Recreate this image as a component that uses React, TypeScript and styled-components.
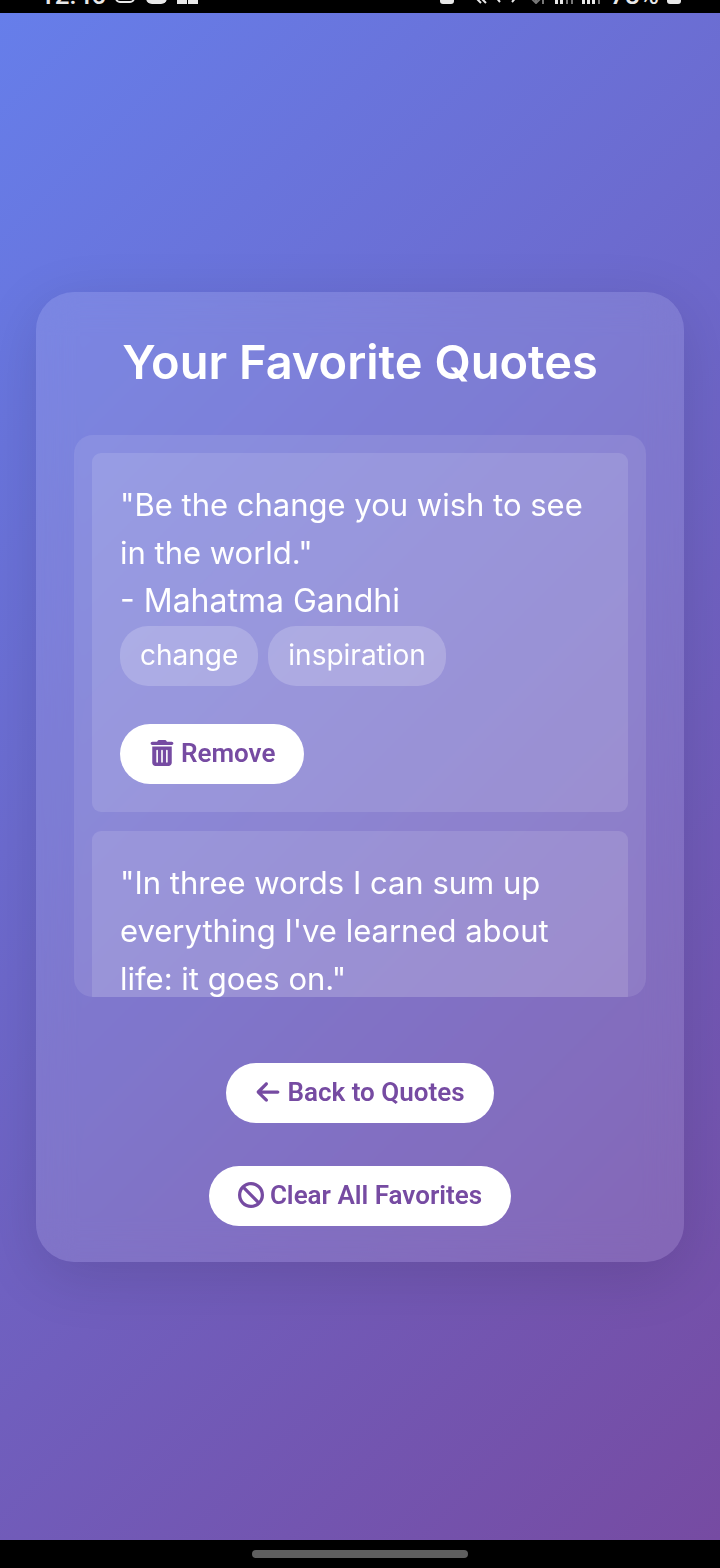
import React from 'react';
import styled, { createGlobalStyle } from 'styled-components';
import { FaArrowLeft, FaBan, FaTrashCan } from 'react-icons/fa6';

const GlobalStyle = createGlobalStyle`
  *, *::before, *::after { box-sizing: border-box; }
  body {
    margin: 0;
    background: #000;
    color: #fff;
    font-family: Inter, 'Open Sans', sans-serif;
  }
`;

const Screen = styled.div`
  display: flex;
  flex-direction: column;
  min-height: 100vh;
`;

const StatusBar = styled.header`
  display: flex;
  justify-content: space-between;
  align-items: flex-end;
  height: 13px;
  padding: 0 39px 9px 40px;
  overflow: hidden;
  background: #000;
  color: #e8e8e8;
`;

const StatusGroup = styled.div`
  display: flex;
  align-items: flex-end;
  gap: 8px;
`;

const StatusText = styled.span`
  height: 22px;
  font: 500 26px/26px Roboto, sans-serif;
`;

const StatusSvg = styled.svg`
  display: block;
  flex: none;
`;

const Main = styled.main`
  flex: 1;
  display: flex;
  align-items: center;
  justify-content: center;
  padding: 36px;
  background: linear-gradient(135deg, #667eea 0%, #764ba2 100%);
`;

const Card = styled.section`
  display: flex;
  flex-direction: column;
  align-items: center;
  width: 100%;
  max-width: 1120px;
  padding: 36px 38px;
  border-radius: 38px;
  background: rgba(255, 255, 255, 0.12);
  box-shadow: 0 15px 60px rgba(0, 0, 0, 0.12);
  backdrop-filter: blur(18px);
`;

const Title = styled.h1`
  margin: 0 0 40px;
  font-size: 47px;
  line-height: 67px;
  font-weight: 600;
  text-align: center;
  white-space: nowrap;
`;

const QuoteList = styled.ul`
  display: flex;
  flex-direction: column;
  gap: 19px;
  width: 100%;
  height: 562px;
  margin: 0 0 66px;
  padding: 18px;
  overflow-y: auto;
  scrollbar-width: none;
  list-style: none;
  border-radius: 19px;
  background: rgba(255, 255, 255, 0.1);
`;

const QuoteItem = styled.li`
  flex: none;
  padding: 28px;
  border-radius: 9px;
  background: rgba(255, 255, 255, 0.12);
  font-size: 31px;
  line-height: 48px;
`;

const QuoteText = styled.p`
  margin: 0;
`;

const Author = styled.p`
  margin: 0;
  font-size: 32px;
`;

const Tags = styled.div`
  display: flex;
  gap: 10px;
  margin: 1px 0 38px;
`;

const Tag = styled.span`
  padding: 5px 20px 7px;
  border-radius: 28px;
  background: rgba(255, 255, 255, 0.2);
  font-size: 28px;
  line-height: 48px;
`;

const PillButton = styled.button`
  display: inline-flex;
  align-items: center;
  gap: 6px;
  height: 60px;
  padding: 0 29px 2px;
  border: 0;
  border-radius: 30px;
  background: #fff;
  color: #764ba2;
  font: 600 26px/30px Roboto, sans-serif;
  white-space: nowrap;
  cursor: pointer;
`;

const Actions = styled.div`
  display: flex;
  flex-direction: column;
  align-items: center;
  gap: 43px;
`;

const NavBar = styled.footer`
  display: flex;
  align-items: center;
  justify-content: center;
  height: 28px;
  background: #000;
`;

const NavHandle = styled.div`
  width: 30%;
  height: 8px;
  border-radius: 4px;
  background: #5f5f5f;
`;

type Quote = { text: string; author: string; tags: string[] };

const quotes: Quote[] = [
  {
    text: 'Be the change you wish to see in the world.',
    author: 'Mahatma Gandhi',
    tags: ['change', 'inspiration'],
  },
  {
    text: "In three words I can sum up everything I've learned about life: it goes on.",
    author: 'Robert Frost',
    tags: ['life'],
  },
];

function NotificationIcons() {
  return (
    <StatusSvg width="84" height="22" viewBox="0 0 84 22" aria-hidden="true">
      <rect x="2" y="2" width="18" height="18" rx="4" fill="none" stroke="#e8e8e8" strokeWidth="2" />
      <rect x="32" y="1" width="21" height="21" rx="6" fill="#e8e8e8" />
      <path d="M63 4h21v18H74v-6h-1v6h-10z" fill="#e8e8e8" />
    </StatusSvg>
  );
}

function SystemIcons() {
  return (
    <StatusSvg width="162" height="22" viewBox="0 0 162 22" aria-hidden="true">
      <rect x="0" y="3" width="14" height="19" rx="3" fill="#e8e8e8" />
      <g fill="none" stroke="#e8e8e8" strokeWidth="2">
        <path d="M34 14l7 7M39 14l7 7M54 13l6 7M78 13l-6 7" />
      </g>
      <g fill="none" stroke="#777" strokeWidth="2">
        <path d="M96 8v13M92 17l4 4 4-4M103 8v14" />
      </g>
      <path d="M115 17h3v5h-3zM120 13h3v9h-3zM142 17h3v5h-3zM147 13h3v9h-3zM152 9h3v13h-3z" fill="#e8e8e8" />
      <path d="M126 9h2v13h-2zM131 5h2v17h-2zM158 5h2v17h-2z" fill="#777" />
    </StatusSvg>
  );
}

function BatteryIcon() {
  return (
    <StatusSvg width="14" height="22" viewBox="0 0 14 22" aria-hidden="true">
      <rect width="14" height="22" rx="3" fill="#e8e8e8" />
    </StatusSvg>
  );
}

function QuoteCard({ quote }: { quote: Quote }) {
  return (
    <QuoteItem>
      <QuoteText>{`"${quote.text}"`}</QuoteText>
      <Author>{`- ${quote.author}`}</Author>
      <Tags>
        {quote.tags.map((tag) => (
          <Tag key={tag}>{tag}</Tag>
        ))}
      </Tags>
      <PillButton type="button">
        <FaTrashCan aria-hidden="true" />
        Remove
      </PillButton>
    </QuoteItem>
  );
}

export default function App() {
  return (
    <>
      <GlobalStyle />
      <Screen>
        <StatusBar>
          <StatusGroup>
            <StatusText>12:46</StatusText>
            <NotificationIcons />
          </StatusGroup>
          <StatusGroup>
            <SystemIcons />
            <StatusText>78%</StatusText>
            <BatteryIcon />
          </StatusGroup>
        </StatusBar>
        <Main>
          <Card>
            <Title>Your Favorite Quotes</Title>
            <QuoteList>
              {quotes.map((quote) => (
                <QuoteCard key={quote.author} quote={quote} />
              ))}
            </QuoteList>
            <Actions>
              <PillButton type="button">
                <FaArrowLeft aria-hidden="true" />
                Back to Quotes
              </PillButton>
              <PillButton type="button">
                <FaBan aria-hidden="true" />
                Clear All Favorites
              </PillButton>
            </Actions>
          </Card>
        </Main>
        <NavBar>
          <NavHandle />
        </NavBar>
      </Screen>
    </>
  );
}
